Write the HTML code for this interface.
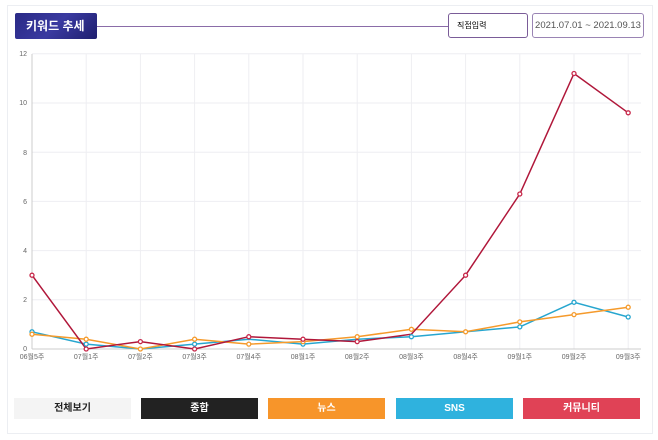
<!DOCTYPE html>
<html><head><meta charset="utf-8"><style>
body{margin:0;width:658px;height:440px;background:#fff;font-family:"Liberation Sans","Noto Sans CJK KR",sans-serif;position:relative;overflow:hidden}
.box{position:absolute;left:7px;top:5px;width:644px;height:427px;border:1px solid #eceef2}
.title{position:absolute;left:15px;top:13px;width:82px;height:26px;background:linear-gradient(135deg,#2a2a86,#3a3aa0 50%,#1e1e6e);border-radius:2px;color:#fff;font-size:12px;font-weight:bold;line-height:26px;text-indent:11px;white-space:nowrap}
.line{position:absolute;left:97px;top:26px;width:352px;height:1px;background:#8a6ca8}
.b1{position:absolute;left:448px;top:13px;width:78px;height:23px;border:1px solid #7a5c98;border-radius:3px;font-size:8px;line-height:23px;text-indent:8px;white-space:nowrap}
.b2{position:absolute;left:532px;top:13px;width:110px;height:23px;border:1px solid #9a84b4;border-radius:3px;font-size:9.5px;color:#555;line-height:23px;text-align:center;white-space:nowrap}
.btn{position:absolute;top:398px;height:21px;width:117px;font-size:10px;font-weight:bold;text-align:center;line-height:21px;color:#fff}
</style></head><body>
<div class="box"></div>
<div class="title">키워드 추세</div>
<div class="line"></div>
<div class="b1">직접입력</div>
<div class="b2">2021.07.01 ~ 2021.09.13</div>
<svg width="658" height="440" style="position:absolute;left:0;top:0" font-family="Liberation Sans,Noto Sans CJK KR,sans-serif">
<g stroke="#eeeef2" stroke-width="1">
<line x1="32" y1="299.8" x2="641" y2="299.8"/><line x1="32" y1="250.6" x2="641" y2="250.6"/><line x1="32" y1="201.4" x2="641" y2="201.4"/><line x1="32" y1="152.2" x2="641" y2="152.2"/><line x1="32" y1="103" x2="641" y2="103"/><line x1="32" y1="53.8" x2="641" y2="53.8"/>
<line x1="86.2" y1="54" x2="86.2" y2="349"/><line x1="140.4" y1="54" x2="140.4" y2="349"/><line x1="194.6" y1="54" x2="194.6" y2="349"/><line x1="248.8" y1="54" x2="248.8" y2="349"/><line x1="303" y1="54" x2="303" y2="349"/><line x1="357.2" y1="54" x2="357.2" y2="349"/><line x1="411.4" y1="54" x2="411.4" y2="349"/><line x1="465.6" y1="54" x2="465.6" y2="349"/><line x1="519.8" y1="54" x2="519.8" y2="349"/><line x1="574" y1="54" x2="574" y2="349"/><line x1="628.2" y1="54" x2="628.2" y2="349"/>
</g>
<line x1="32" y1="54" x2="32" y2="349" stroke="#ccc"/>
<line x1="32" y1="349" x2="641" y2="349" stroke="#ccc"/>
<g font-size="7" fill="#666" text-anchor="end">
<text x="27" y="351">0</text><text x="27" y="302">2</text><text x="27" y="253">4</text><text x="27" y="204">6</text><text x="27" y="155">8</text><text x="27" y="105">10</text><text x="27" y="56">12</text>
</g>
<g font-size="7" fill="#666" text-anchor="middle">
<text x="32" y="359">06월5주</text><text x="86.2" y="359">07월1주</text><text x="140.4" y="359">07월2주</text><text x="194.6" y="359">07월3주</text><text x="248.8" y="359">07월4주</text><text x="303" y="359">08월1주</text><text x="357.2" y="359">08월2주</text><text x="411.4" y="359">08월3주</text><text x="465.6" y="359">08월4주</text><text x="519.8" y="359">09월1주</text><text x="574" y="359">09월2주</text><text x="628.2" y="359">09월3주</text>
</g>
<g fill="none" stroke-width="1.5">
<polyline stroke="#27a6cf" points="32,331.8 86.2,344.1 140.4,349 194.6,344.1 248.8,339.2 303,344.1 357.2,339.2 411.4,336.7 465.6,331.8 519.8,326.9 574,302.3 628.2,317"/>
<polyline stroke="#f59a2b" points="32,334.2 86.2,339.2 140.4,349 194.6,339.2 248.8,344.1 303,341.6 357.2,336.7 411.4,329.3 465.6,331.8 519.8,321.9 574,314.6 628.2,307.2"/>
<polyline stroke="#b0173a" points="32,275.2 86.2,349 140.4,341.6 194.6,349 248.8,336.7 303,339.2 357.2,341.6 411.4,334.2 465.6,275.2 519.8,194 574,73.5 628.2,112.8"/>
</g>
<g fill="#fff" stroke-width="1.3">
<g stroke="#27a6cf"><circle cx="32" cy="331.8" r="2"/><circle cx="86.2" cy="344.1" r="2"/><circle cx="194.6" cy="344.1" r="2"/><circle cx="303" cy="344.1" r="2"/><circle cx="411.4" cy="336.7" r="2"/><circle cx="519.8" cy="326.9" r="2"/><circle cx="574" cy="302.3" r="2"/><circle cx="628.2" cy="317" r="2"/></g>
<g stroke="#f59a2b"><circle cx="32" cy="334.2" r="2"/><circle cx="86.2" cy="339.2" r="2"/><circle cx="140.4" cy="349" r="2"/><circle cx="194.6" cy="339.2" r="2"/><circle cx="248.8" cy="344.1" r="2"/><circle cx="303" cy="341.6" r="2"/><circle cx="357.2" cy="336.7" r="2"/><circle cx="411.4" cy="329.3" r="2"/><circle cx="465.6" cy="331.8" r="2"/><circle cx="519.8" cy="321.9" r="2"/><circle cx="574" cy="314.6" r="2"/><circle cx="628.2" cy="307.2" r="2"/></g>
<g stroke="#c8284a"><circle cx="32" cy="275.2" r="2"/><circle cx="86.2" cy="349" r="2"/><circle cx="140.4" cy="341.6" r="2"/><circle cx="194.6" cy="349" r="2"/><circle cx="248.8" cy="336.7" r="2"/><circle cx="303" cy="339.2" r="2"/><circle cx="357.2" cy="341.6" r="2"/><circle cx="465.6" cy="275.2" r="2"/><circle cx="519.8" cy="194" r="2"/><circle cx="574" cy="73.5" r="2"/><circle cx="628.2" cy="112.8" r="2"/></g>
</g>
</svg>
<div class="btn" style="left:14px;background:#f4f4f4;color:#222">전체보기</div>
<div class="btn" style="left:141px;background:#222">종합</div>
<div class="btn" style="left:268px;background:#f7952a">뉴스</div>
<div class="btn" style="left:396px;background:#2fb2de">SNS</div>
<div class="btn" style="left:523px;background:#e04256">커뮤니티</div>
</body></html>
